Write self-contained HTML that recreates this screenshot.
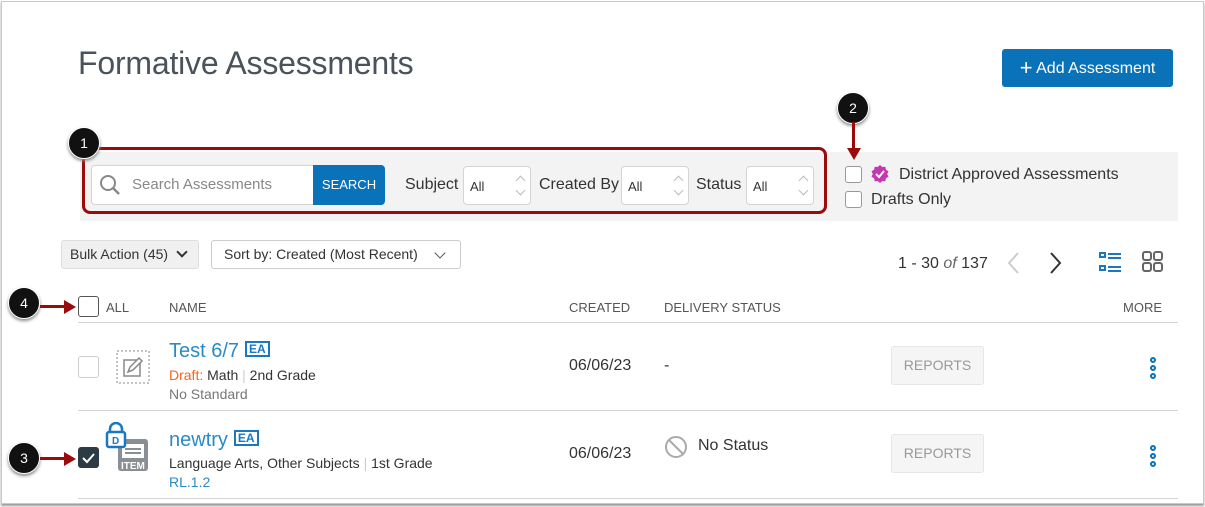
<!DOCTYPE html>
<html><head><meta charset="utf-8"><style>
*{box-sizing:border-box;margin:0;padding:0}
body{width:1205px;height:507px;background:#fff;font-family:"Liberation Sans",sans-serif;position:relative;overflow:hidden;color:#2d3b45}
.a{position:absolute;white-space:nowrap}
.frame{left:1px;top:1px;width:1203px;height:503px;border:1px solid #c8c8c8;box-shadow:0 2px 2px #999}
.sel{position:absolute;height:39px;background:#fff;border:1px solid #d4d4d4;border-radius:4px;font-size:13px;padding:12px 0 0 6px;color:#333}
.sel:after{content:"";position:absolute;right:6px;top:10px;width:6px;height:6px;border-left:1px solid #bbb;border-top:1px solid #bbb;transform:rotate(45deg)}
.sel:before{content:"";position:absolute;right:6px;top:20px;width:6px;height:6px;border-right:1px solid #bbb;border-bottom:1px solid #bbb;transform:rotate(45deg)}
.cb{position:absolute;border:1px solid #999;border-radius:3px;background:#fff}
.call{position:absolute;width:32px;height:32px;border-radius:50%;background:#111;color:#fff;font-size:14px;text-align:center;line-height:30px;box-shadow:0 2px 3px #888;border:1px solid #fff}
.hd{font-size:13px;color:#555;top:300px}
.rep{position:absolute;width:93px;height:39px;background:#f5f5f5;border:1px solid #e6e6e6;border-radius:3px;color:#999;font-size:14px;text-align:center;line-height:37px}
.dots{position:absolute;width:6px}
.dots i{display:block;width:6px;height:6px;border:2px solid #0a72b8;border-radius:50%;margin-bottom:2px}
.ea{display:inline-block;border:2px solid #1a78c2;color:#1a78c2;font-size:12px;font-weight:bold;padding:0 2px;line-height:12px;vertical-align:4px;margin-left:6px}
.line{position:absolute;left:78px;width:1100px;height:1px;background:#d4d4d4}
</style></head><body>
<div class="a frame"></div>
<div class="a" style="left:78px;top:45px;font-size:32px;color:#4a535c;letter-spacing:-0.2px">Formative Assessments</div>
<div class="a" style="left:1002px;top:49px;width:171px;height:38px;background:#0a72b8;border-radius:3px;color:#fff;font-size:16px;line-height:38px;text-align:center"><span style="font-size:22px;vertical-align:-2px">+</span> Add Assessment</div>

<div class="a" style="left:80px;top:152px;width:1098px;height:69px;background:#f3f3f3"></div>
<div class="a" style="left:82px;top:147px;width:745px;height:67px;border:3px solid #9b0b0b;border-radius:8px"></div>
<div class="a" style="left:91px;top:165px;width:223px;height:40px;background:#fff;border:1px solid #d4d4d4;border-radius:4px 0 0 4px"></div>
<svg class="a" style="left:99px;top:174px" width="22" height="22"><circle cx="9" cy="9" r="7" fill="none" stroke="#888" stroke-width="2"/><line x1="14" y1="14" x2="20" y2="20" stroke="#888" stroke-width="2.5"/></svg>
<div class="a" style="left:132px;top:176px;font-size:15px;color:#888">Search Assessments</div>
<div class="a" style="left:313px;top:165px;width:72px;height:40px;background:#0a72b8;border-radius:0 4px 4px 0;color:#fff;font-size:13px;line-height:40px;text-align:center">SEARCH</div>
<div class="a" style="left:405px;top:176px;font-size:16px;color:#333">Subject</div>
<div class="sel" style="left:463px;top:166px;width:68px">All</div>
<div class="a" style="left:539px;top:176px;font-size:16px;color:#333">Created By</div>
<div class="sel" style="left:621px;top:166px;width:68px">All</div>
<div class="a" style="left:696px;top:176px;font-size:16px;color:#333">Status</div>
<div class="sel" style="left:746px;top:166px;width:68px">All</div>

<div class="cb" style="left:845px;top:166px;width:17px;height:17px"></div>
<svg class="a" style="left:870px;top:164px" width="20" height="20"><path d="M10 1l2.3 2 3-.3.6 3 2.6 1.6-1.3 2.7 1.3 2.7-2.6 1.6-.6 3-3-.3-2.3 2-2.3-2-3 .3-.6-3L1.5 12.7 2.8 10 1.5 7.3l2.6-1.6.6-3 3 .3z" fill="#c436b3"/><path d="M6 10l3 3 5-6" fill="none" stroke="#fff" stroke-width="2"/></svg>
<div class="a" style="left:899px;top:166px;font-size:16px;color:#333">District Approved Assessments</div>
<div class="cb" style="left:845px;top:191px;width:17px;height:17px"></div>
<div class="a" style="left:871px;top:191px;font-size:16px;color:#333">Drafts Only</div>

<div class="a" style="left:61px;top:240px;width:138px;height:29px;background:#f0f0f0;border:1px solid #ddd;border-radius:3px;font-size:14px;line-height:27px;padding-left:8px;color:#333">Bulk Action (45) <span style="display:inline-block;width:8px;height:8px;border-right:2px solid #333;border-bottom:2px solid #333;transform:rotate(45deg);margin-left:6px;vertical-align:3px"></span></div>
<div class="a" style="left:211px;top:240px;width:250px;height:29px;background:#fff;border:1px solid #ccc;border-radius:3px;font-size:14px;line-height:27px;padding-left:12px;color:#333">Sort by: Created (Most Recent)<span style="position:absolute;right:16px;top:8px;width:8px;height:8px;border-right:1px solid #555;border-bottom:1px solid #555;transform:rotate(45deg)"></span></div>

<div class="a" style="left:898px;top:255px;font-size:16px;color:#333">1 - 30 <i style="color:#666">of</i> 137</div>
<svg class="a" style="left:1006px;top:251px" width="16" height="24"><path d="M12 2L3 12l9 10" fill="none" stroke="#ccc" stroke-width="2"/></svg>
<svg class="a" style="left:1047px;top:251px" width="16" height="24"><path d="M4 2l9 10-9 10" fill="none" stroke="#333" stroke-width="2"/></svg>
<svg class="a" style="left:1099px;top:251px" width="24" height="22" fill="none" stroke="#1a78c2" stroke-width="2"><rect x="1" y="2" width="5" height="4"/><rect x="1" y="15" width="5" height="4"/><path d="M9 3h13M9 7h13M9 16h13M9 20h13"/></svg>
<svg class="a" style="left:1141px;top:251px" width="24" height="22" fill="none" stroke="#666" stroke-width="2"><rect x="2" y="1" width="8" height="8" rx="2"/><rect x="13" y="1" width="8" height="8" rx="2"/><rect x="2" y="12" width="8" height="8" rx="2"/><rect x="13" y="12" width="8" height="8" rx="2"/></svg>

<div class="cb" style="left:78px;top:296px;width:21px;height:21px;border-color:#555"></div>
<div class="a hd" style="left:106px">ALL</div>
<div class="a hd" style="left:169px">NAME</div>
<div class="a hd" style="left:569px">CREATED</div>
<div class="a hd" style="left:664px">DELIVERY STATUS</div>
<div class="a hd" style="left:1123px">MORE</div>
<div class="line" style="top:322px"></div>

<div class="cb" style="left:78px;top:356px;width:21px;height:22px;border-color:#ccc"></div>
<svg class="a" style="left:114px;top:348px" width="38" height="38"><rect x="3" y="3" width="32" height="32" fill="none" stroke="#888" stroke-dasharray="2 2"/><rect x="10" y="12" width="16" height="16" fill="none" stroke="#888" stroke-width="1.5"/><path d="M14 24l2-5 9-9 3 3-9 9z" fill="#fff" stroke="#888" stroke-width="1.5"/></svg>
<div class="a" style="left:169px;top:340px;font-size:20px;color:#2a8ac8">Test 6/7<span class="ea">EA</span></div>
<div class="a" style="left:169px;top:367px;font-size:14px;color:#333"><b style="color:#f26522;font-weight:normal">Draft:</b> Math <span style="color:#ccc">|</span> 2nd Grade</div>
<div class="a" style="left:169px;top:386px;font-size:14px;color:#777">No Standard</div>
<div class="a" style="left:569px;top:357px;font-size:16px;color:#333">06/06/23</div>
<div class="a" style="left:664px;top:357px;font-size:16px;color:#333">-</div>
<div class="rep" style="left:891px;top:346px">REPORTS</div>
<div class="dots" style="left:1150px;top:357px"><i></i><i></i><i></i></div>
<div class="line" style="top:410px"></div>

<div class="a" style="left:78px;top:447px;width:21px;height:21px;background:#2d3b45;border-radius:3px"></div>
<svg class="a" style="left:78px;top:447px" width="21" height="21"><path d="M5 11l4 4 7-8" fill="none" stroke="#fff" stroke-width="2"/></svg>
<svg class="a" style="left:105px;top:422px" width="48" height="52"><rect x="13" y="17" width="30" height="32" rx="3" fill="#8a8f94"/><rect x="17" y="22" width="22" height="14" fill="#fff"/><path d="M20 27h16M20 31h16" stroke="#8a8f94" stroke-width="2"/><text x="16" y="47" font-size="10" font-weight="bold" fill="#fff" font-family="Liberation Sans">ITEM</text><path d="M5 10V7a6 6 0 0112 0v3" fill="none" stroke="#1a78c2" stroke-width="2.5"/><rect x="2" y="10" width="18" height="15" rx="2" fill="#fff" stroke="#1a78c2" stroke-width="2.5"/><text x="7" y="22" font-size="10" font-weight="bold" fill="#1a78c2" font-family="Liberation Sans">D</text></svg>
<div class="a" style="left:169px;top:429px;font-size:20px;color:#2a8ac8">newtry<span class="ea">EA</span></div>
<div class="a" style="left:169px;top:455px;font-size:14px;color:#333">Language Arts, Other Subjects <span style="color:#ccc">|</span> 1st Grade</div>
<div class="a" style="left:169px;top:474px;font-size:14px;color:#2a8ac8">RL.1.2</div>
<div class="a" style="left:569px;top:445px;font-size:16px;color:#333">06/06/23</div>
<svg class="a" style="left:664px;top:435px" width="24" height="24"><circle cx="12" cy="12" r="10" fill="none" stroke="#aaa" stroke-width="2"/><path d="M5 5l14 14" stroke="#aaa" stroke-width="2"/></svg>
<div class="a" style="left:698px;top:437px;font-size:16px;color:#333">No Status</div>
<div class="rep" style="left:891px;top:434px">REPORTS</div>
<div class="dots" style="left:1150px;top:445px"><i></i><i></i><i></i></div>
<div class="line" style="top:498px"></div>

<div class="call" style="left:68px;top:127px">1</div>
<div class="call" style="left:837px;top:92px">2</div>
<div class="a" style="left:852px;top:122px;width:3px;height:30px;background:#9b0b0b"></div>
<div class="a" style="left:847px;top:148px;border-left:7px solid transparent;border-right:7px solid transparent;border-top:12px solid #9b0b0b"></div>
<div class="call" style="left:8px;top:287px">4</div>
<div class="a" style="left:40px;top:305px;width:30px;height:3px;background:#9b0b0b"></div>
<div class="a" style="left:64px;top:300px;border-top:7px solid transparent;border-bottom:7px solid transparent;border-left:12px solid #9b0b0b"></div>
<div class="call" style="left:8px;top:442px">3</div>
<div class="a" style="left:40px;top:457px;width:30px;height:3px;background:#9b0b0b"></div>
<div class="a" style="left:64px;top:452px;border-top:7px solid transparent;border-bottom:7px solid transparent;border-left:12px solid #9b0b0b"></div>
</body></html>
